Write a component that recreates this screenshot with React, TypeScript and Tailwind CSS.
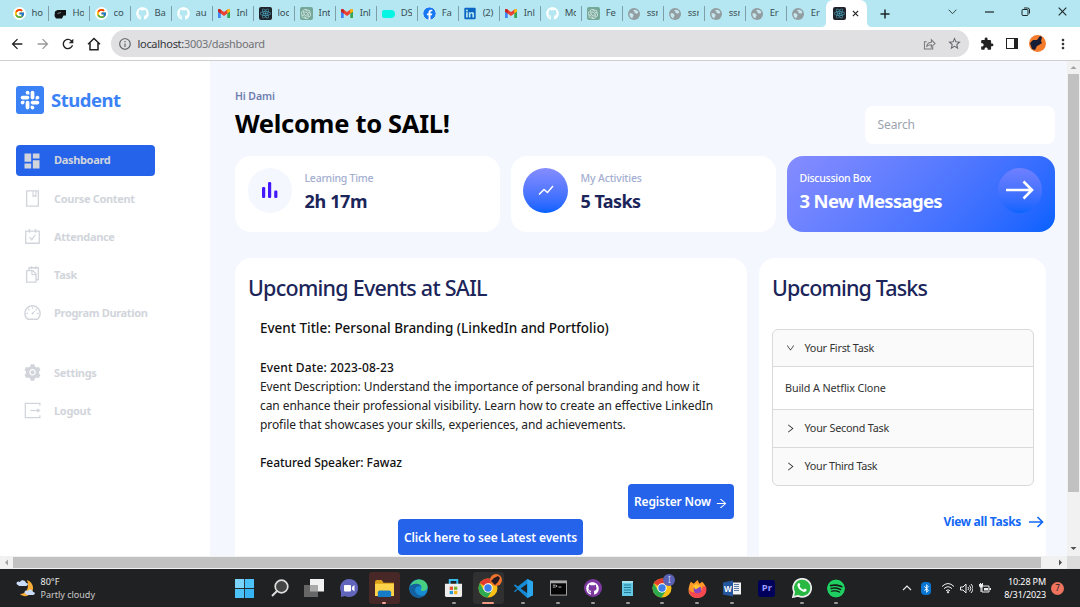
import React from "react";
import {
  AiFillSlackSquare,
  AiOutlineBook,
  AiOutlineCarryOut,
  AiOutlineSnippets,
  AiOutlineDashboard,
  AiFillSetting,
  AiOutlineArrowRight,
  AiOutlineRight,
  AiOutlineDown,
} from "react-icons/ai";
import { FcGoogle } from "react-icons/fc";
import { FaGithub, FaReact, FaFacebook, FaLinkedin, FaSpotify, FaBluetoothB } from "react-icons/fa";
import { SiOpenai } from "react-icons/si";
import {
  MdDashboard,
  MdExtension,
  MdMoreVert,
  MdStarBorder,
  MdOutlineInfo,
  MdRefresh,
  MdArrowBack,
  MdArrowForward,
} from "react-icons/md";

function Gmail() {
  return (
    <svg viewBox="0 0 24 18" className="h-[9px] w-[12px]">
      <path d="M0 2v16h5.500V7z" fill="#4285f4" />
      <path d="M24 2v16h-5.500V7z" fill="#34a853" />
      <path d="M0 2.500C0 0 3 -.8 5 .8L12 6l7-5.200C21 -.8 24 0 24 2.500V5l-12 9L0 5z" fill="#ea4335" />
      <path d="M18.500 1.200 19 .8C21 -.8 24 0 24 2.500V5l-5.500 4z" fill="#fbbc04" />
      <path d="M0 5V2.500C0 1 1 0 2.500 0l3 1.200V9z" fill="#c5221f" />
    </svg>
  );
}

function ReactTile() {
  return (
    <span className="flex h-[13px] w-[13px] items-center justify-center rounded-[2px] bg-[#20232a]">
      <FaReact className="h-[11px] w-[11px] text-[#4fb3cf]" />
    </span>
  );
}

function OpenAi() {
  return (
    <span className="flex h-[13px] w-[13px] items-center justify-center rounded-[2px] bg-[#75a898]">
      <SiOpenai className="h-[10px] w-[10px] text-[#dcebe6]" />
    </span>
  );
}

function GoogleDot() {
  return (
    <span className="flex h-[13px] w-[13px] items-center justify-center rounded-full bg-white">
      <FcGoogle className="h-[11px] w-[11px]" />
    </span>
  );
}

function Globe() {
  return (
    <svg viewBox="0 0 12 12" className="h-[12px] w-[12px]">
      <circle cx="6" cy="6" r="6" fill="#929da1" />
      <path d="M1.500 5.500C3.500 5 5 5.500 5.500 7S4 8.500 4.500 10.500C2.500 9.800 1.300 8 1.500 5.500M5 2.500C6.500 1 9 1.800 10.300 4c-.3 2-1.800 1.500-2.600 1.300S6 5 6.500 4 5.500 3.500 5 2.500" fill="#c6e6ed" />
    </svg>
  );
}

const Github = () => <FaGithub className="h-[13px] w-[13px] text-white" />;

const tabs: { icon: React.ReactNode; title: string }[] = [
  { icon: <GoogleDot />, title: "ho" },
  {
    icon: (
      <svg viewBox="0 0 12 10" className="h-[10px] w-[12px]">
        <path d="M1 2.500 3.500 1H12v5.500H9.500L8 9.500H2L.5 7z" fill="#101214" />
        <path d="M3.500 4.500 7 3.500" stroke="#9ba8ad" strokeWidth=".8" />
      </svg>
    ),
    title: "Ho",
  },
  { icon: <GoogleDot />, title: "co" },
  { icon: <Github />, title: "Ba" },
  { icon: <Github />, title: "au" },
  { icon: <Gmail />, title: "Inl" },
  { icon: <ReactTile />, title: "loc" },
  { icon: <OpenAi />, title: "Int" },
  { icon: <Gmail />, title: "Inl" },
  { icon: <span className="h-2 w-[13px] rounded-l-[2px] rounded-r-[4px] bg-[#05f5e4]" />, title: "DS" },
  { icon: <FaFacebook className="h-[13px] w-[13px] rounded-full bg-white text-[#1877f2]" />, title: "Fa" },
  { icon: <FaLinkedin className="h-[13px] w-[12px] text-[#0a66c2]" />, title: "(2)" },
  { icon: <Gmail />, title: "Inl" },
  { icon: <Github />, title: "Mo" },
  { icon: <OpenAi />, title: "Fe" },
  { icon: <Globe />, title: "ssr" },
  { icon: <Globe />, title: "ssr" },
  { icon: <Globe />, title: "ssr" },
  { icon: <Globe />, title: "Er" },
  { icon: <Globe />, title: "Er" },
];

function TabStrip() {
  return (
    <div className="flex h-[27px] shrink-0 bg-[#b4e7f1] pl-[7px]">
      {tabs.map((t, i) => (
        <div key={i} className="flex w-[41.020px] shrink-0 items-center">
          <span className="ml-[5px] flex w-[14px] shrink-0 items-center justify-center">{t.icon}</span>
          <span className="ml-[5.500px] w-[11px] overflow-hidden text-[9.500px] tracking-[-0.200px] whitespace-nowrap text-[#3c4f55]">{t.title}</span>
          <span className={i < 19 ? "-mr-[0.500px] ml-auto h-[15px] w-px bg-[#7f9fa8]" : "hidden"} />
        </div>
      ))}
      <div className="relative -ml-px flex h-[27px] w-[41px] items-center gap-[6px] rounded-t-[7px] bg-white pl-[6.500px]">
        <ReactTile />
        <svg viewBox="0 0 8 8" className="h-[7px] w-[7px]"><path d="M1 1l6 6M7 1 1 7" stroke="#222" strokeWidth="1.400" /></svg>
        <svg viewBox="0 0 5 5" className="absolute bottom-0 -left-[5px] h-[5px] w-[5px]"><path d="M5 0v5H0Q5 5 5 0" fill="#fff" /></svg>
        <svg viewBox="0 0 5 5" className="absolute -right-[5px] bottom-0 h-[5px] w-[5px]"><path d="M0 0v5h5Q0 5 0 0" fill="#fff" /></svg>
      </div>
      <div className="flex flex-1 items-center">
        <svg viewBox="0 0 10 10" className="ml-[13px] h-[10px] w-[10px]"><path d="M5 .5v9M.5 5h9" stroke="#1d2629" strokeWidth="1.500" /></svg>
        <svg viewBox="0 0 9 6" className="-mt-[4px] ml-[58px] h-[6px] w-[9px]"><path d="M.7.7 4.500 4.700 8.300.7" fill="none" stroke="#3a484c" strokeWidth="1" /></svg>
        <svg viewBox="0 0 9 2" className="-mt-[4px] ml-[28px] h-[2px] w-[9px]"><path d="M0 1h9" stroke="#1d2629" strokeWidth="1.200" /></svg>
        <svg viewBox="0 0 10 10" className="-mt-[4px] ml-[27px] h-[10px] w-[10px]" fill="none" stroke="#1d2629" strokeWidth="1"><rect x="1" y="2.500" width="6" height="6" rx="1" /><path d="M3 1h3.500Q8.500 1 8.500 3v3.500" /></svg>
        <svg viewBox="0 0 9 9" className="-mt-[4px] ml-[27px] h-[9px] w-[9px]"><path d="M.7.7l7.600 7.600M8.300.7.7 8.300" stroke="#1d2629" strokeWidth="1.100" /></svg>
      </div>
    </div>
  );
}

function Toolbar() {
  return (
    <div className="flex h-[34px] shrink-0 items-center border-b border-[#cfcfd2] bg-white">
      <MdArrowBack className="ml-[9px] h-4 w-4 text-[#222]" />
      <MdArrowForward className="ml-[10px] h-4 w-4 text-[#999]" />
      <MdRefresh className="ml-[9px] h-4 w-4 text-[#222]" />
      <svg viewBox="0 0 14 14" className="ml-[10.500px] h-[14px] w-[14px]"><path d="M1 7.300 7 1.500l6 5.800M3 6v6.700h8V6" fill="none" stroke="#222" strokeWidth="1.500" /></svg>
      <div className="ml-[10.500px] flex h-[27px] w-[858px] items-center rounded-full bg-[#e0e0e3]">
        <MdOutlineInfo className="ml-[7px] h-[14px] w-[14px] text-[#5f6368]" />
        <span className="ml-[5.500px] text-[11px] leading-none tracking-[-0.300px] text-[#707276]"><span className="text-[#36373a]">localhost:</span>3003/dashboard</span>
        <svg viewBox="0 0 14 13" className="ml-auto h-[12px] w-[13px]" fill="none" stroke="#777" strokeWidth="1.100"><path d="M4 4H1.500v8h9V9.500" /><path d="M4 9c.5-3 2-4.500 5-4.500V2l4 4-4 3.800V7.400C7 7.400 5.500 7.700 4 9z" /></svg>
        <MdStarBorder className="mr-[7px] ml-[11px] h-[15px] w-[15px] text-[#5f6368]" />
      </div>
      <MdExtension className="ml-[10.500px] h-[14px] w-[14px] text-[#222]" />
      <span className="ml-[12px] h-[11px] w-[12px] border-[1.500px] border-r-[4px] border-[#222]" />
      <svg viewBox="0 0 17 17" className="ml-[11px] h-[17px] w-[17px]"><circle cx="8.500" cy="8.500" r="8.500" fill="#f47b2b" /><path d="M1 8 4 5h4l3-4 2 1-1 4 1 2-3 2-2 1-2 4-3-1-1-3z" fill="#171d35" /></svg>
      <MdMoreVert className="ml-[9px] h-4 w-4 text-[#333]" />
    </div>
  );
}

function LogoutIcon({ className }: { className?: string }) {
  return (
    <svg viewBox="0 0 18 18" className={className} fill="none" stroke="currentColor" strokeWidth="1.200">
      <path d="M16 4.500V2.200H2.200v13.600H16v-2.300" />
      <path d="M7 9h7.500" />
      <path d="m13.500 6.800 3.200 2.200-3.200 2.200z" fill="currentColor" stroke="none" />
    </svg>
  );
}

const nav = [
  { icon: AiOutlineBook, label: "Course Content" },
  { icon: AiOutlineCarryOut, label: "Attendance" },
  { icon: AiOutlineSnippets, label: "Task" },
  { icon: AiOutlineDashboard, label: "Program Duration" },
];
const navBottom = [
  { icon: AiFillSetting, label: "Settings" },
  { icon: LogoutIcon, label: "Logout" },
];

function NavItem({ icon: Icon, label }: { icon: React.ComponentType<{ className?: string }>; label: string }) {
  return (
    <div className="flex h-[38px] items-center pl-[6.500px] text-[#d1d5db]">
      <Icon className="-mt-px h-[19px] w-[19px]" />
      <span className="ml-[12.500px] text-[11px] font-bold tracking-[-0.320px]">{label}</span>
    </div>
  );
}

function Sidebar() {
  return (
    <aside className="w-[210px] shrink-0 bg-white pt-[23px] pl-4">
      <div className="flex h-[33px] items-center text-[#3b82f6]">
        <span className="-mt-px flex h-[28px] w-[28px] shrink-0 items-center justify-center overflow-hidden rounded-[3px] bg-[#3b82f6]">
          <span className="flex h-[24px] w-[24px] items-center justify-center overflow-hidden bg-white">
            <AiFillSlackSquare className="h-[38px] w-[38px] shrink-0" />
          </span>
        </span>
        <span className="-mt-[2px] ml-[7px] text-[18.500px] font-bold tracking-[-0.500px]">Student</span>
      </div>
      <div className="mt-[28px] flex h-[31px] w-[139px] items-center rounded-[4px] bg-[#2563eb] pl-[6px] text-[#d1d5db]">
        <MdDashboard className="h-[20px] w-[20px]" />
        <span className="ml-[12px] text-[11px] font-bold tracking-[-0.330px]">Dashboard</span>
      </div>
      <div className="mt-[4px]">{nav.map((n) => <NavItem key={n.label} {...n} />)}</div>
      <div className="mt-[22px]">{navBottom.map((n) => <NavItem key={n.label} {...n} />)}</div>
    </aside>
  );
}

function Stats() {
  return (
    <div className="mt-[12px] flex h-[76.500px] shrink-0 gap-[11px]">
      <div className="flex w-[265px] rounded-[16px] bg-white pt-[12px] pl-[13px]">
        <div className="flex h-[45px] w-[44px] items-center justify-center rounded-full bg-[#f4f7fe]">
          <svg viewBox="0 0 16 16" className="h-4 w-4" fill="#4318ff"><rect y="5" width="3.200" height="11" rx="1.200" /><rect x="6" width="3.200" height="16" rx="1.200" /><rect x="12.200" y="8.500" width="3.200" height="7.500" rx="1.200" /></svg>
        </div>
        <div className="ml-[12.500px]">
          <p className="mt-[2px] text-[10.500px] leading-[16px] font-medium tracking-[-0.250px] text-[#a3aed0]">Learning Time</p>
          <p className="mt-[3px] text-[18px] leading-[24px] font-bold tracking-[-0.350px] text-[#1b2559]">2h 17m</p>
        </div>
      </div>
      <div className="flex w-[265px] rounded-[16px] bg-white pt-[12px] pl-[12px]">
        <div className="flex h-[45px] w-[45px] items-center justify-center rounded-full bg-linear-to-b from-[#868cff] to-[#0061ff]">
          <svg viewBox="0 0 16 11" className="h-[11px] w-4"><path d="M1 9.500 6 4.500l3.500 3L15 1" fill="none" stroke="#fff" strokeWidth="1.500" /></svg>
        </div>
        <div className="ml-[12.500px]">
          <p className="mt-[2px] text-[10.500px] leading-[16px] font-medium tracking-[-0.150px] text-[#a3aed0]">My Activities</p>
          <p className="mt-[3px] text-[18px] leading-[24px] font-bold tracking-[-0.550px] text-[#1b2559]">5 Tasks</p>
        </div>
      </div>
      <div className="flex w-[268px] rounded-[16px] bg-linear-135 from-[#868cff] to-[#0061ff] pt-[12px] pr-[13px] pl-[12.500px] text-white">
        <div>
          <p className="mt-[2px] text-[10.500px] leading-[16px] font-medium tracking-[-0.250px]">Discussion Box</p>
          <p className="mt-[3px] text-[18.500px] leading-[24px] font-bold tracking-[-0.680px] whitespace-nowrap">3 New Messages</p>
        </div>
        <div className="ml-auto flex h-[45px] w-[44px] items-center justify-center rounded-full bg-linear-to-b from-[#6f80ff] to-[#0864ff]">
          <svg viewBox="0 0 30 20" className="h-[20px] w-[30px]"><path d="M1 10h26M18.500 1.500 27 10l-8.500 8.500" fill="none" stroke="#fff" strokeWidth="2.600" /></svg>
        </div>
      </div>
    </div>
  );
}

function Events() {
  return (
    <section className="flex w-[512px] flex-col rounded-t-[16px] bg-white px-[13px] pt-[12px]">
      <h2 className="mt-px text-[21.500px] leading-[34px] font-medium tracking-[-0.750px] text-[#1b2559]">Upcoming Events at SAIL</h2>
      <div className="px-[12px] text-[12px] leading-[19px] text-[#111]">
        <h3 className="mt-[13px] text-[13.500px] leading-[20px] font-medium tracking-[-0.010px] whitespace-nowrap">Event Title: Personal Branding (LinkedIn and Portfolio)</h3>
        <p className="mt-[20px] font-medium tracking-[0.120px]">Event Date: 2023-08-23</p>
        <p className="tracking-[-0.080px] whitespace-nowrap text-[#222]">
          Event Description: Understand the importance of personal branding and how it<br />
          can enhance their professional visibility. Learn how to create an effective LinkedIn<br />
          profile that showcases your skills, experiences, and achievements.
        </p>
        <p className="mt-[19px] font-medium tracking-[-0.040px]">Featured Speaker: Fawaz</p>
      </div>
      <button className="mt-[12px] flex h-[35px] w-[106px] shrink-0 items-center self-end rounded-[4px] bg-[#2563eb] pl-[6px] text-[12px] font-semibold tracking-[-0.130px] whitespace-nowrap text-white">
        Register Now
        <AiOutlineArrowRight className="mt-[4px] ml-[4px] h-[13px] w-[13px] shrink-0" />
      </button>
      <button className="ml-[150px] flex h-[36px] w-[185px] shrink-0 items-center justify-center rounded-[4px] bg-[#2563eb] pt-px text-[12px] font-semibold tracking-[-0.130px] whitespace-nowrap text-white">Click here to see Latest events</button>
    </section>
  );
}

function Tasks() {
  return (
    <section className="flex w-[287px] flex-col rounded-t-[16px] bg-white px-[13px] pt-[12px]">
      <h2 className="mt-px text-[21.500px] leading-[34px] font-medium tracking-[-0.850px] text-[#1b2559]">Upcoming Tasks</h2>
      <div className="mt-[24px] w-[262px] overflow-hidden rounded-[6px] border border-[#d9d9d9] bg-[#fafafa] text-[10.800px] tracking-[-0.220px] text-[#333]">
        <div className="flex h-[37px] items-center border-b border-[#d9d9d9] pl-[12px]"><AiOutlineDown className="h-[10px] w-[11px]" /><span className="ml-[8.500px]">Your First Task</span></div>
        <div className="flex h-[43px] items-center border-b border-[#d9d9d9] bg-white pl-[12px] tracking-[-0.120px]">Build A Netflix Clone</div>
        <div className="flex h-[37.500px] items-center border-b border-[#d9d9d9] pl-[12px]"><AiOutlineRight className="h-[11px] w-[11px]" /><span className="ml-[8.500px]">Your Second Task</span></div>
        <div className="flex h-[37px] items-center pl-[12px]"><AiOutlineRight className="h-[11px] w-[11px]" /><span className="ml-[8.500px] tracking-[-0.300px]">Your Third Task</span></div>
      </div>
      <div className="mt-[26px] -mr-[11px] flex items-center justify-end text-[12px] leading-[20px] font-bold tracking-[-0.300px] text-[#1268f5]">
        <span>View all Tasks</span>
        <svg viewBox="0 0 15 12" className="ml-[8px] h-[12px] w-[15px]"><path d="M0 6h13M8.500 1l5 5-5 5" fill="none" stroke="#1268f5" strokeWidth="1.700" /></svg>
      </div>
    </section>
  );
}

function Chrome() {
  return (
    <svg viewBox="0 0 20 20" className="h-[20px] w-[20px]">
      <circle cx="10" cy="10" r="9.500" fill="#fbc116" />
      <path d="M10 10 1.800 5.200A9.500 9.500 0 0 1 18.200 5.200L10 5.200z" fill="#e33b2e" />
      <path d="M1.800 5.200A9.500 9.500 0 0 0 9.500 19.500L14 12.400 6 12.400z" fill="#2da94f" />
      <circle cx="10" cy="10" r="4.700" fill="#fff" />
      <circle cx="10" cy="10" r="3.700" fill="#3b7de9" />
    </svg>
  );
}

const apps: { icon: React.ReactNode; mark?: string; tile?: string }[] = [
  { icon: <svg viewBox="0 0 18 18" className="h-[19px] w-[19px]" fill="#36b4f4"><path d="M0 0h8.600v8.600H0z" fill="#7bd4fb" /><path d="M9.400 0H18v8.600H9.400zM0 9.400h8.600V18H0z" fill="#4cc2f8" /><path d="M9.400 9.400H18V18H9.400z" /></svg> },
  { icon: <svg viewBox="0 0 18 18" className="h-[18px] w-[18px]"><path d="m1 17 5-5" stroke="#ddd" strokeWidth="2" /><circle cx="10.500" cy="7.500" r="6.300" fill="#454545" stroke="#ddd" strokeWidth="1.700" /></svg> },
  { icon: <svg viewBox="0 0 20 18" className="h-[18px] w-[20px]"><path d="M6 0h14v12.500H6z" fill="#f2f2f2" /><path d="M0 6h14v12H0z" fill="#666" /><path d="M6 6h8v6.500H6z" fill="#aaa" /></svg> },
  { icon: <svg viewBox="0 0 18 18" className="h-[18px] w-[18px]"><path d="M9 0a9 9 0 1 1-4 17L1 18V13A9 9 0 0 1 9 0" fill="#6265bc" /><rect x="4" y="6" width="7" height="6.500" rx="1" fill="#fff" /><path d="m12 8 2.500-2v6.500L12 10.500z" fill="#fff" /></svg> },
  { icon: <svg viewBox="0 0 20 18" className="h-[17px] w-[19px]"><path d="M0 2q0-2 2-2h5l2 3h11v14H0z" fill="#dca018" /><path d="M0 4h20v13H0z" fill="#ffd44a" /><path d="M3 18v-5q0-2 2-2h10q2 0 2 2v5z" fill="#167cc5" /></svg>, mark: "h-[2px] w-[4px] bg-[#f5a99b]", tile: "bg-[#472827]" },
  { icon: <svg viewBox="0 0 20 20" className="h-[19px] w-[19px]"><circle cx="10" cy="10" r="9.800" fill="#178bd2" /><path d="M1 8C3 2 8 0 12 .5c5 .7 8 5 7.500 8.500-.5 4-7 4.500-7 2.500 0-1 1-1.500.7-3C12 4 5 4 1 8" fill="#46ce83" /><path d="M1 8C4 4 11 4 13 8c-5-1.500-8 2-6 6 2 3.500 6 4.500 10.500 2.500C12 22-1 20 1 8" fill="#15619f" /></svg> },
  { icon: <svg viewBox="0 0 20 20" className="h-[19px] w-[19px]"><path d="M6 6V1h8v5" fill="none" stroke="#36bbef" strokeWidth="2" /><path d="M1 5h18v12q0 2-2 2H3q-2 0-2-2z" fill="#eee" /><path d="M6 8h3.500v3.500H6z" fill="#e6502a" /><path d="M10.500 8H14v3.500h-3.500z" fill="#78b536" /><path d="M6 12.500h3.500V16H6z" fill="#2497d5" /><path d="M10.500 12.500H14V16h-3.500z" fill="#eeb21d" /></svg>, mark: "h-[2px] w-[4px] bg-[#999]" },
  { icon: <span className="relative"><Chrome /><svg viewBox="0 0 12 12" className="absolute -top-[4px] -right-[4px] h-[12px] w-[12px]"><circle cx="6" cy="6" r="6" fill="#ef732c" /><path d="m1 7 3-3 4-2 2 2-2 4-3 3z" fill="#251a22" /></svg></span>, mark: "h-[2px] w-[12px] bg-[#f29782]", tile: "bg-[#303030]" },
  { icon: <svg viewBox="0 0 20 20" className="h-[19px] w-[19px]"><path d="m14 0 6 3v14l-6 3L4 11l-3 3-1-1 3.500-3L0 7l1-1.500L4 8z" fill="#168bd3" /><path d="m14 5-7 5 7 5z" fill="#202124" /><path d="m14 0 6 3v14l-6 3z" fill="#2ba7ee" /></svg>, mark: "h-[2px] w-[4px] bg-[#999]" },
  { icon: <svg viewBox="0 0 18 16" className="h-[16px] w-[17px]"><path d="M0 0h18v16H0z" fill="#aaa" /><path d="M1 3h16v12H1z" fill="#050505" /><path d="M3 5h3M3 7h3M7 5v2M9 7h3" stroke="#ddd" strokeWidth=".9" /></svg>, mark: "h-[2px] w-[4px] bg-[#999]" },
  { icon: <span className="flex h-[18px] w-[18px] items-center justify-center rounded-full bg-[#7d38a0]"><FaGithub className="h-[13px] w-[13px] text-white" /></span>, mark: "h-[2px] w-[4px] bg-[#999]" },
  { icon: <svg viewBox="0 0 13 16" className="h-[16px] w-[13px]"><path d="M1 1h11v15H1z" fill="#62c8e4" /><path d="M1 1h11v2H1z" fill="#a6e3f0" /><path d="M3 5h7M3 7.500h7M3 10h7M3 12.500h7" stroke="#207a99" /></svg>, mark: "h-[2px] w-[4px] bg-[#999]" },
  { icon: <span className="relative"><Chrome /><span className="absolute -top-[4px] -right-[3px] flex h-[12px] w-[12px] items-center justify-center rounded-full bg-[#5961b3] text-[8px] text-[#cfd3ff]">I</span></span>, mark: "h-[2px] w-[4px] bg-[#999]" },
  { icon: <svg viewBox="0 0 20 20" className="h-[19px] w-[19px]"><path d="M3 3l3 2 4-4 2 4 3-2c4 4 5 8 3 12-4 7-14 6-17 0-1-4 0-8 2-12" fill="#ff9a27" /><path d="M1 11c2 3 6 4 8 2 3 2 7-1 6-5l4 0c2 7-3 12-9 12S1 16 1 11" fill="#f64851" /><circle cx="10" cy="11" r="4" fill="#8646c4" /><path d="M5 7q5-3 8 1l-5 3z" fill="#ffc62e" /></svg>, mark: "h-[2px] w-[4px] bg-[#999]" },
  { icon: <span className="relative flex"><svg viewBox="0 0 18 16" className="h-[17px] w-[18px]"><path d="M9 2h9v12H9z" fill="#f0f0f0" /><path d="M11 4h5M11 6h5M11 8h5M11 10h5" stroke="#5879a6" /><path d="m0 2 10-2v16L0 14z" fill="#24569d" /></svg><span className="absolute top-[4px] left-px text-[8px] leading-[10px] font-bold text-white">W</span></span>, mark: "h-[2px] w-[4px] bg-[#999]" },
  { icon: <span className="flex h-[17px] w-[17px] items-center justify-center rounded-[3px] bg-[#00005b] text-[9.500px] font-bold text-[#9999ff]">Pr</span> },
  { icon: <svg viewBox="0 0 20 20" className="h-[20px] w-[20px]"><path d="m1 19 1.200-5A9 9 0 1 1 6 17.800z" fill="#29b943" stroke="#eee" strokeWidth="1.700" /><path d="M6 5.500c1-1 2 0 2.300 1.500L7.600 8.300c1 1.700 2 2.700 3.800 3.500l1.300-1.200c1.800.6 2.300 1.200 1.700 2.200-1.200 2-4 1-6-.7C6.500 10.500 4.500 7.500 6 5.500" fill="#fff" /></svg>, mark: "h-[2px] w-[4px] bg-[#999]" },
  { icon: <FaSpotify className="h-[19px] w-[18px] rounded-full bg-[#161616] text-[#20cf61]" />, mark: "h-[2px] w-[4px] bg-[#999]" },
];

function Taskbar() {
  return (
    <footer className="flex h-[38px] shrink-0 items-center bg-[#202122] text-[9px] text-white">
      <svg viewBox="0 0 20 18" className="ml-[16px] h-[18px] w-[20px]"><path d="M11 1c6 2 8 9 4 13-3 4-8 4-11 1 6 0 10-6 7-14" fill="#f6ac36" /><path d="M2 6c-3-1-1-5 2-3 1-3 6-2 6 1 3 0 2 3 0 3H3" fill="#cbdcf8" /><path d="M10 15c-3-1-1-5 2-3 1-3 5-1 5 1 3 0 2 3 0 3h-6" fill="#cbdcf8" /></svg>
      <div className="ml-[4.500px] w-[187px] leading-[13px] text-[#eee]"><p>80°F</p><p className="text-[#ccc]">Partly cloudy</p></div>
      <div className="flex">
        {apps.map((a, i) => (
          <div key={i} className="flex w-[34.800px] justify-center">
            <div className={`relative flex h-[32px] w-[31px] items-center justify-center rounded-[3px] ${a.tile ?? ""}`}>
              {a.icon}
              {a.mark && <span className={`absolute bottom-0 rounded-full ${a.mark}`} />}
            </div>
          </div>
        ))}
      </div>
      <div className="mr-[16px] ml-auto flex items-center">
        <svg viewBox="0 0 10 6" className="h-[6px] w-[10px]"><path d="m1 5 4-4 4 4" fill="none" stroke="#eee" strokeWidth="1.100" /></svg>
        <span className="ml-[9px] flex h-[13px] w-[10px] items-center justify-center rounded-[4px] bg-[#0876d4]"><FaBluetoothB className="h-[9px] w-[9px]" /></span>
        <svg viewBox="0 0 14 11" className="ml-[10px] h-[12px] w-[14px]" fill="none" stroke="#eee" strokeWidth="1"><path d="M1 4q6-6 12 0M3 6.200q4-4 8 0M5 8.300q2-2 4 0" /><circle cx="7" cy="9.700" r=".7" fill="#eee" /></svg>
        <svg viewBox="0 0 13 11" className="ml-[5px] h-[11px] w-[13px]" fill="none" stroke="#eee"><path d="M.5 4H3l3-3v9L3 7H.5zM8 4q1.500 1.500 0 3M9.500 2.500q3 3 0 6M11 1q4 4.500 0 9" /></svg>
        <svg viewBox="0 0 12 10" className="ml-[6px] h-[10px] w-[12px]"><path d="M3 3h7v6H3z" fill="none" stroke="#eee" /><path d="M5 5h4v2.500H5zM10.500 5H12v2h-1.500zM0 1h1V0h1v1h1V0h1v3L2.500 5V9H1.500V5L0 3z" fill="#eee" /></svg>
        <div className="ml-[12px] w-[43px] text-right text-[9px] leading-[13px] tracking-[-0.120px] whitespace-nowrap"><p>10:28 PM</p><p>8/31/2023</p></div>
        <span className="ml-[5px] flex h-[13px] w-[13px] items-center justify-center rounded-full bg-[#ef735f] text-[8px] text-[#222]">7</span>
      </div>
    </footer>
  );
}

export default function App() {
  return (
    <div className="flex h-[607px] w-[1080px] flex-col overflow-hidden bg-white font-['Noto_Sans','Open_Sans',sans-serif]">
      <TabStrip />
      <Toolbar />
      <div className="flex h-[495px] shrink-0">
        <Sidebar />
        <main className="flex w-[857px] flex-col overflow-hidden bg-[#f4f7fe] pl-[25px]">
          <div className="flex h-[82.500px] w-[820px] shrink-0 items-end justify-between">
            <div className="h-[82.500px]">
              <p className="mt-[27px] text-[10.500px] leading-[16px] font-semibold tracking-[-0.100px] text-[#707eae]">Hi Dami</p>
              <h1 className="mt-[2px] text-[25.500px] leading-[34px] font-bold tracking-[-0.300px] text-black">Welcome to SAIL!</h1>
            </div>
            <div className="flex h-[38px] w-[190px] items-center rounded-[8px] bg-white pt-px pl-[12.500px] text-[12px] tracking-[-0.100px] text-[#9ca3af]">Search</div>
          </div>
          <Stats />
          <div className="mt-[26px] flex flex-1 gap-[12px]">
            <Events />
            <Tasks />
          </div>
        </main>
        <div className="flex w-[13px] flex-col items-center bg-[#f1f1f1]">
          <svg viewBox="0 0 13 13" className="h-[13px] w-[13px]"><path d="m3.500 8 3-3 3 3z" fill="#a3a3a3" /></svg>
          <div className="h-[418px] w-[11px] bg-[#c1c1c1]" />
          <svg viewBox="0 0 13 13" className="mt-auto h-[15px] w-[13px]"><path d="m3.500 5 3 3 3-3z" fill="#505050" /></svg>
        </div>
      </div>
      <div className="flex h-[13px] shrink-0 items-center bg-[#f1f1f1]">
        <svg viewBox="0 0 13 13" className="h-[13px] w-[13px]"><path d="M8 3.500l-3 3 3 3z" fill="#a3a3a3" /></svg>
        <div className="h-[11px] w-[1028px] bg-[#c1c1c1]" />
        <svg viewBox="0 0 13 13" className="ml-auto h-[13px] w-[13px]"><path d="m5 3.500 3 3-3 3z" fill="#505050" /></svg>
        <div className="h-[13px] w-[13px] bg-[#dcdcdc]" />
      </div>
      <Taskbar />
    </div>
  );
}
